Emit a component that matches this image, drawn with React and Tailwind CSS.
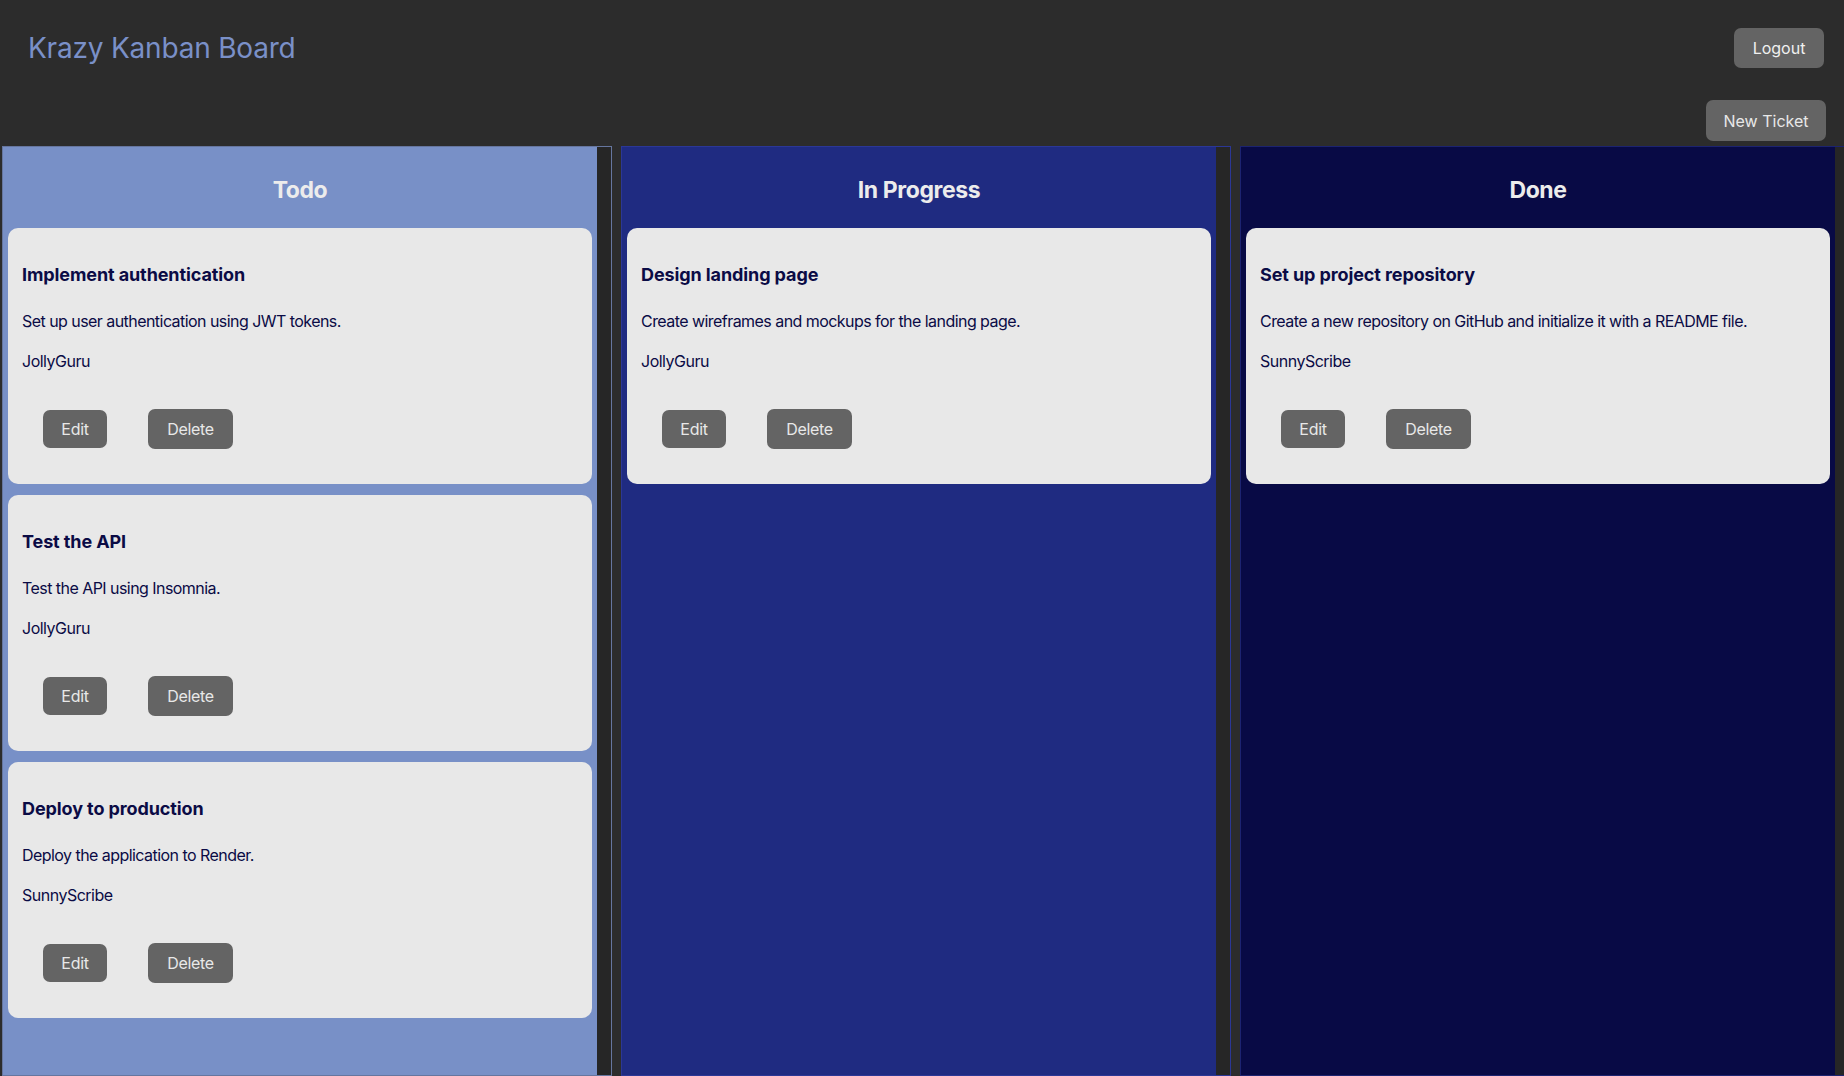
const columns = [
  {
    title: 'Todo',
    bg: 'bg-[#7890c7]',
    border: 'border-[#66769f]',
    tickets: [
      { id: 1, name: 'Implement authentication', description: 'Set up user authentication using JWT tokens.', user: 'JollyGuru' },
      { id: 2, name: 'Test the API', description: 'Test the API using Insomnia.', user: 'JollyGuru' },
      { id: 3, name: 'Deploy to production', description: 'Deploy the application to Render.', user: 'SunnyScribe' },
    ],
  },
  {
    title: 'In Progress',
    bg: 'bg-[#1f2b81]',
    border: 'border-[#2b3796]',
    tickets: [
      { id: 4, name: 'Design landing page', description: 'Create wireframes and mockups for the landing page.', user: 'JollyGuru' },
    ],
  },
  {
    title: 'Done',
    bg: 'bg-[#080a45]',
    border: 'border-[#1c2370]',
    tickets: [
      { id: 5, name: 'Set up project repository', description: 'Create a new repository on GitHub and initialize it with a README file.', user: 'SunnyScribe' },
    ],
  },
];

const TicketCard = ({ ticket }) => (
  <div className="mx-[5px] mb-[11px] h-[256px] shrink-0 rounded-[10px] bg-[#e8e8e8] px-[14px] pt-[35px] text-[#0b0b45]">
    <h3 className="text-[18px] font-bold leading-[24px] tracking-[-0.1px]">{ticket.name}</h3>
    <p className="mt-[22px] text-[16px] leading-[24px] tracking-[-0.55px]">{ticket.description}</p>
    <p className="mt-[16px] text-[16px] leading-[24px] tracking-[-0.5px]">{ticket.user}</p>
    <div className="mt-[36px] flex items-center">
      <button className="ml-[21px] h-[38px] w-[64px] rounded-[7px] bg-[#646464] text-[16px] tracking-[-0.3px] text-[#e8e8e8]">Edit</button>
      <button className="ml-[41px] h-[40px] w-[85px] rounded-[7px] bg-[#646464] text-[16px] tracking-[-0.3px] text-[#e8e8e8]">Delete</button>
    </div>
  </div>
);

const Column = ({ column }) => (
  <div className={`flex h-[930px] w-[610px] shrink-0 border ${column.border}`}>
    <div className={`flex flex-1 flex-col ${column.bg}`}>
      <h2 className="flex h-[81px] shrink-0 items-center justify-center pt-[5px] text-[23px] font-bold tracking-[-0.4px] text-[#ececec]">
        {column.title}
      </h2>
      {column.tickets.map(ticket => (
        <TicketCard key={ticket.id} ticket={ticket} />
      ))}
    </div>
    <div className="w-[14px] shrink-0 bg-[#262626]" />
  </div>
);

const App = () => {
  return (
    <div className="h-screen w-screen overflow-hidden bg-[#2c2c2c] font-['Inter',sans-serif]">
      {/* Header */}
      <header className="flex h-[94px] items-center justify-between pl-[28px] pr-[20px] pt-[2px]">
        <h1 className="text-[28px] font-normal tracking-[-0.2px] text-[#7a90c8]">Krazy Kanban Board</h1>
        <button className="h-[40px] w-[90px] rounded-[7px] bg-[#646464] text-[16px] text-[#f0f0f0]">Logout</button>
      </header>

      <div className="flex h-[52px] items-start justify-end pr-[18px] pt-[6px]">
        <button className="h-[41px] w-[120px] rounded-[7px] bg-[#646464] text-[16px] text-[#e8e8e8]">New Ticket</button>
      </div>

      {/* Board */}
      <div className="flex gap-[9px] pl-[2px]">
        {columns.map(column => (
          <Column key={column.title} column={column} />
        ))}
      </div>
    </div>
  );
};

export default App;
